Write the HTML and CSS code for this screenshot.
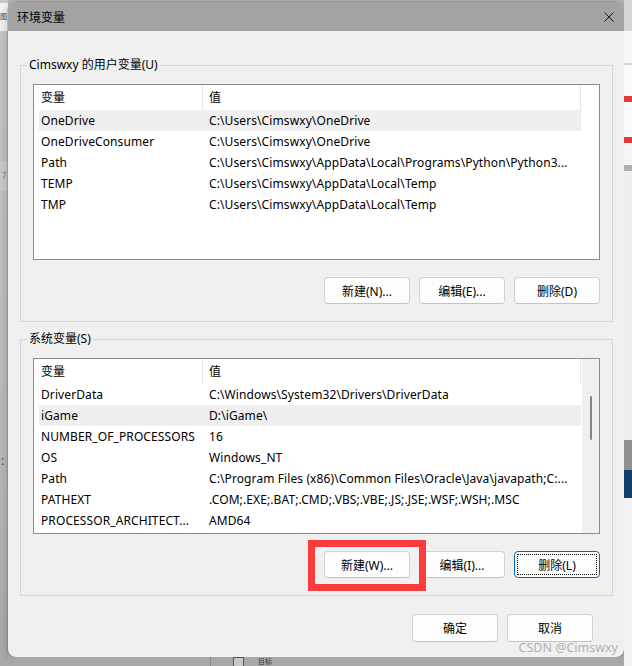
FILE: index.html
```html
<!DOCTYPE html>
<html>

<head>
    <meta charset="utf-8">
    <title>环境变量</title>
    <link rel="stylesheet" href="styles.css">
</head>

<body>
    <div class="screen">
        <div class="desk-left">
            <div class="desk-left-top"><span>图</span></div>
            <div class="desk-left-mid"><span>7</span></div>
            <div class="desk-left-low"><span>:</span></div>
        </div>

        <div class="desk-center">
            <div class="window">
                <div class="titlebar">
                    <span class="title">环境变量</span>
                    <svg class="close" width="10" height="10" viewBox="0 0 10 10">
                        <path d="M0.5 0.5L9.5 9.5M9.5 0.5L0.5 9.5" stroke="#1b1b1b" stroke-width="1" fill="none" />
                    </svg>
                </div>

                <div class="content">
                    <fieldset class="group">
                        <legend>Cimswxy 的用户变量(U)</legend>
                        <div class="list">
                            <div class="list-main">
                                <div class="list-head">
                                    <div class="head-name">变量</div>
                                    <div class="head-value">值</div>
                                </div>
                                <div class="row is-current">
                                    <div class="cell-name">OneDrive</div>
                                    <div class="cell-value">C:\Users\Cimswxy\OneDrive</div>
                                </div>
                                <div class="row">
                                    <div class="cell-name">OneDriveConsumer</div>
                                    <div class="cell-value">C:\Users\Cimswxy\OneDrive</div>
                                </div>
                                <div class="row">
                                    <div class="cell-name">Path</div>
                                    <div class="cell-value">C:\Users\Cimswxy\AppData\Local\Programs\Python\Python3...</div>
                                </div>
                                <div class="row">
                                    <div class="cell-name">TEMP</div>
                                    <div class="cell-value">C:\Users\Cimswxy\AppData\Local\Temp</div>
                                </div>
                                <div class="row">
                                    <div class="cell-name">TMP</div>
                                    <div class="cell-value">C:\Users\Cimswxy\AppData\Local\Temp</div>
                                </div>
                            </div>
                        </div>
                        <div class="actions">
                            <button class="btn">新建(N)...</button>
                            <button class="btn">编辑(E)...</button>
                            <button class="btn">删除(D)</button>
                        </div>
                    </fieldset>

                    <fieldset class="group">
                        <legend>系统变量(S)</legend>
                        <div class="list">
                            <div class="list-main">
                                <div class="list-head">
                                    <div class="head-name">变量</div>
                                    <div class="head-value">值</div>
                                </div>
                                <div class="row">
                                    <div class="cell-name">DriverData</div>
                                    <div class="cell-value">C:\Windows\System32\Drivers\DriverData</div>
                                </div>
                                <div class="row is-current">
                                    <div class="cell-name">iGame</div>
                                    <div class="cell-value">D:\iGame\</div>
                                </div>
                                <div class="row">
                                    <div class="cell-name">NUMBER_OF_PROCESSORS</div>
                                    <div class="cell-value">16</div>
                                </div>
                                <div class="row">
                                    <div class="cell-name">OS</div>
                                    <div class="cell-value">Windows_NT</div>
                                </div>
                                <div class="row">
                                    <div class="cell-name">Path</div>
                                    <div class="cell-value">C:\Program Files (x86)\Common Files\Oracle\Java\javapath;C:...</div>
                                </div>
                                <div class="row">
                                    <div class="cell-name">PATHEXT</div>
                                    <div class="cell-value">.COM;.EXE;.BAT;.CMD;.VBS;.VBE;.JS;.JSE;.WSF;.WSH;.MSC</div>
                                </div>
                                <div class="row">
                                    <div class="cell-name">PROCESSOR_ARCHITECT...</div>
                                    <div class="cell-value">AMD64</div>
                                </div>
                            </div>
                            <div class="scrollbar">
                                <div class="thumb"></div>
                            </div>
                        </div>
                        <div class="actions">
                            <span class="callout"><button class="btn">新建(W)...</button></span>
                            <button class="btn">编辑(I)...</button>
                            <button class="btn is-focused">删除(L)</button>
                        </div>
                    </fieldset>

                    <div class="footer">
                        <button class="btn btn-lg">确定</button>
                        <button class="btn btn-lg">取消</button>
                    </div>
                </div>
            </div>
            <div class="desk-bottom">
                <div class="desk-bottom-line"></div>
                <div class="desk-check"></div>
                <span class="desk-label">目标</span>
            </div>
        </div>

        <div class="desk-right">
            <div class="strip s1"></div>
            <div class="strip s2"></div>
            <div class="strip s-line"></div>
            <div class="strip s3"></div>
            <div class="strip s-red"></div>
            <div class="strip s4"></div>
            <div class="strip s-red"></div>
            <div class="strip s5"></div>
            <div class="strip s6"></div>
            <div class="strip s7"></div>
            <div class="strip s8"></div>
            <div class="strip s9"></div>
            <div class="strip s10"></div>
        </div>

        <div class="watermark">CSDN @Cimswxy</div>
    </div>
</body>

</html>
```

FILE: styles.css
```css
body {
    margin: 0;
    width: 632px;
    height: 666px;
    overflow: hidden;
    background: #b4b4b4;
    font-family: "Noto Sans", "Noto Sans CJK SC", sans-serif;
    font-size: 12px;
    color: #000;
}

.screen {
    position: relative;
    display: flex;
    height: 666px;
}

/* desktop around the dialog */
.desk-left {
    width: 8px;
    overflow: hidden;
    display: flex;
    flex-direction: column;
    background: linear-gradient(#c6c6c6, #b9b9b9 70%, #a9a9a9);
}

.desk-left-top {
    height: 28px;
    margin-top: 3px;
    background: #f2f2f2;
    line-height: 28px;
    font-size: 7px;
    color: #444;
}

.desk-left-top span,
.desk-left-mid span,
.desk-left-low span {
    display: block;
    margin-left: 0;
}

.desk-left-mid {
    margin-top: 130px;
    height: 30px;
    line-height: 30px;
    background: #c9c9c9;
    color: #888;
    font-size: 8px;
    text-align: center;
}

.desk-left-low {
    margin-top: 262px;
    line-height: 16px;
    color: #444;
}

.desk-left-low span {
    margin-left: 1px;
}

.desk-center {
    width: 616px;
    display: flex;
    flex-direction: column;
}

.desk-bottom {
    flex: 1;
    display: flex;
    align-items: flex-start;
    background: #a8a8a8;
    overflow: hidden;
}

.desk-bottom-line {
    width: 1px;
    height: 9px;
    margin-left: 202px;
    background: #8a8a8a;
}

.desk-check {
    width: 9px;
    height: 9px;
    margin: 0 0 0 22px;
    border: 1px solid #555;
    border-bottom: none;
    background: #c8c8c8;
}

.desk-label {
    margin-left: 14px;
    line-height: 9px;
    font-size: 7px;
    color: #333;
}

.desk-right {
    width: 8px;
    display: flex;
    flex-direction: column;
    background: #f1f1f1;
}

.strip {
    flex-shrink: 0;
}

.s1 { height: 31px; background: #d5d5d5; }
.s2 { height: 32px; background: #f7f7f7; }
.s-line { height: 2px; background: #d6d6d6; }
.s3 { height: 31px; background: #f9f9f9; }
.s-red { height: 6px; background: #e33b3b; }
.s4 { height: 35px; background: #fafafa; }
.s5 { height: 22px; background: #f4f4f4; }
.s6 { height: 6px; background: #b0b0b0; }
.s7 { height: 269px; background: #efefef; }
.s8 { height: 30px; background: #8f8f8f; }
.s9 { height: 28px; background: #123e6a; }
.s10 { flex: 1; background: #f2f2f2; }

/* dialog */
.window {
    margin-top: 2px;
    height: 655px;
    flex-shrink: 0;
    background: #f0f0f0;
    border-radius: 8px;
    overflow: hidden;
    box-shadow: 0 0 0 1px rgba(0, 0, 0, 0.12), 0 3px 10px rgba(0, 0, 0, 0.25);
}

.titlebar {
    height: 29px;
    display: flex;
    align-items: center;
    justify-content: space-between;
    padding: 0 10px 0 9px;
    background: #a3a3a3;
}

.title {
    font-size: 12px;
    line-height: 16px;
    margin-top: 2px;
}

.close {
    display: block;
}

.content {
    padding: 26px 11px 0 12px;
}

.group {
    margin: 0;
    min-width: 0;
    padding: 11px 12px 17px;
    border: 1px solid #d6d6d6;
}

.group + .group {
    margin-top: 9px;
}

.group legend {
    margin-left: -6px;
    padding: 0 2px;
    line-height: 16px;
}

.list {
    display: flex;
    height: 176px;
    box-sizing: border-box;
    border: 1px solid #8b8b8b;
    background: #fff;
}

.list-main {
    flex: 1;
    min-width: 0;
}

.list-head {
    display: flex;
    height: 25px;
    line-height: 25px;
}

.head-name,
.head-value {
    box-sizing: border-box;
    border-right: 1px solid #e5e5e5;
}

.head-name {
    width: 169px;
    padding-left: 7px;
}

.head-value {
    width: 378px;
    padding-left: 6px;
}

.row {
    display: flex;
    width: 542px;
    height: 21px;
    margin-left: 5px;
    line-height: 21px;
}

.row.is-current {
    background: #efefef;
}

.cell-name,
.cell-value {
    box-sizing: border-box;
    white-space: nowrap;
    overflow: hidden;
    text-overflow: ellipsis;
    letter-spacing: 0.1px;
}

.cell-name {
    width: 164px;
    padding-left: 2px;
}

.cell-value {
    flex: 1;
    padding: 0 8px 0 6px;
}

.scrollbar {
    width: 17px;
    display: flex;
    justify-content: center;
    padding-top: 37px;
    background: #f0f0f0;
}

.thumb {
    width: 2px;
    height: 44px;
    border-radius: 1px;
    background: #858585;
}

.actions {
    display: flex;
    justify-content: flex-end;
    gap: 9px;
    margin-top: 17px;
}

.btn {
    width: 86px;
    height: 27px;
    padding: 0;
    border: 1px solid #d2d2d2;
    border-bottom-color: #c4c4c4;
    border-radius: 4px;
    background: #fdfdfd;
    font: inherit;
    color: #000;
}

.btn.is-focused {
    border-color: #0067c0;
    outline: 1px dotted #000;
    outline-offset: -4px;
}

.btn-lg {
    height: 28px;
}

/* red annotation drawn over the screenshot */
.callout {
    position: relative;
    display: block;
}

.callout .btn {
    display: block;
}

.callout::after {
    content: "";
    position: absolute;
    top: -11px;
    right: -16px;
    bottom: -13px;
    left: -16px;
    border: 7px solid #fb3c3c;
    pointer-events: none;
}

.footer {
    display: flex;
    justify-content: flex-end;
    gap: 9px;
    margin-top: 18px;
    padding-right: 20px;
}

.watermark {
    position: absolute;
    right: 14px;
    top: 639px;
    font-size: 12.5px;
    line-height: 18px;
    color: rgba(165, 165, 165, 0.85);
}
```
